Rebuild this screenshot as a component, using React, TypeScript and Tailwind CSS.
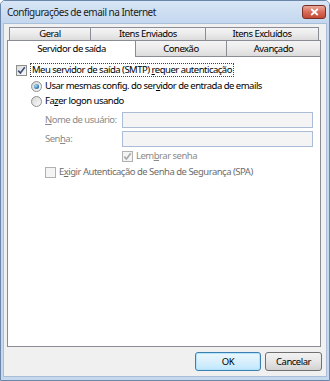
import React from "react";

function CheckBox({ checked, disabled }: { checked?: boolean; disabled?: boolean }) {
  return (
    <span
      className={
        "inline-flex w-[11px] h-[11px] shrink-0 items-center justify-center border " +
        (disabled ? "border-[#b1b1b1] bg-[#f4f4f4]" : "border-[#8e8f8f] bg-gradient-to-br from-[#dcdcdc] to-[#fafafa]")
      }
    >
      {checked && (
        <svg width="9" height="9" viewBox="0 0 9 9">
          <path
            d="M1.2 4.6 L3.4 7 L7.8 1.2"
            fill="none"
            stroke={disabled ? "#a8a8a8" : "#3b4f7a"}
            strokeWidth="1.6"
          />
        </svg>
      )}
    </span>
  );
}

function Radio({ checked }: { checked?: boolean }) {
  return (
    <span className="inline-flex w-[11px] h-[11px] shrink-0 items-center justify-center rounded-full border border-[#8e8f8f] bg-gradient-to-br from-[#d6d6d6] to-[#fbfbfb]">
      {checked && (
        <span className="w-[5px] h-[5px] rounded-full bg-[radial-gradient(circle_at_35%_35%,#a9e0f5,#2a73a8_70%,#1b4f7a)]" />
      )}
    </span>
  );
}

function U({ children }: { children: React.ReactNode }) {
  return <span className="underline underline-offset-[1px]">{children}</span>;
}

function Tab({ label, w, cls = "" }: { label: string; w: string; cls?: string }) {
  return (
    <div
      className={
        "flex items-center justify-center border border-b-0 border-[#898c95] bg-gradient-to-b from-[#f4f4f4] via-[#ebebeb] to-[#dcdcdc] text-[9.5px] leading-none " +
        w +
        " " +
        cls
      }
    >
      {label}
    </div>
  );
}

export default function App() {
  return (
    <div className="w-[330px] h-[381px] bg-[#c5d8ee] border border-[#6a86ab] rounded-t-[5px] flex flex-col overflow-hidden font-['Noto_Sans',sans-serif] tracking-[-0.5px] text-black">
      {/* title bar */}
      <div className="h-[22px] shrink-0 flex items-center justify-between pl-[6px] pr-[3px] bg-gradient-to-b from-[#d8e6f6] to-[#c3d7ee]">
        <span className="text-[10px] leading-none text-[#1b1b1b] whitespace-nowrap">Configurações de email na Internet</span>
        <div className="w-[24px] h-[14px] rounded-[3px] border border-[#7b2e24] bg-gradient-to-b from-[#e9a99b] via-[#d86a57] to-[#c24a36] flex items-center justify-center">
          <svg width="9" height="8" viewBox="0 0 9 8">
            <path d="M1.2 1 L7.8 7 M7.8 1 L1.2 7" stroke="#fff" strokeWidth="1.8" />
          </svg>
        </div>
      </div>

      {/* client area */}
      <div className="flex-1 mx-[2px] mb-[3px] bg-[#f0f0f0] border border-[#a9bed8] flex flex-col">
        <div className="pt-[3px] pl-[3px]">
          {/* tab row 1 */}
          <div className="flex h-[13px] ml-[2px]">
            <Tab label="Geral" w="w-[82px]" />
            <Tab label="Itens Enviados" w="w-[116px] -ml-px" />
            <Tab label="Itens Excluídos" w="w-[114px] -ml-px" />
          </div>
          {/* tab row 2 */}
          <div className="flex items-start h-[16px]">
            <div className="relative z-10 w-[129px] h-[17px] flex items-center justify-center border border-b-0 border-[#898c95] bg-white text-[9.5px] leading-none">
              Servidor de saída
            </div>
            <Tab label="Conexão" w="w-[92px] h-[16px] -ml-px" />
            <Tab label="Avançado" w="w-[95px] h-[16px] -ml-px" />
          </div>
          {/* panel */}
          <div className="w-[314px] h-[291px] bg-white border border-[#898c95] pt-[6px] pl-[8px] text-[9.5px] leading-none whitespace-nowrap">
            <div className="flex items-center h-[14px] gap-[3px]">
              <CheckBox checked />
              <span className="border border-dotted border-[#444] px-[1px] py-[1px]">
                Meu servidor de saída (SMTP) <U>r</U>equer autenticação
              </span>
            </div>
            <div className="flex items-center h-[14px] mt-[2px] ml-[15px] gap-[3px]">
              <Radio checked />
              <span>
                Usar mesmas config. do ser<U>v</U>idor de entrada de emails
              </span>
            </div>
            <div className="flex items-center h-[14px] mt-[1px] ml-[15px] gap-[3px]">
              <Radio />
              <span>
                Fa<U>z</U>er logon usando
              </span>
            </div>
            <div className="flex items-center h-[16px] mt-[4px] ml-[29px] text-[#8a8a8a]">
              <span className="w-[77px]">
                <U>N</U>ome de usuário:
              </span>
              <div className="w-[191px] h-[16px] border border-[#abbdd6] bg-[#f4f4f4]" />
            </div>
            <div className="flex items-center h-[16px] mt-[3px] ml-[29px] text-[#8a8a8a]">
              <span className="w-[77px]">
                Sen<U>h</U>a:
              </span>
              <div className="w-[191px] h-[16px] border border-[#abbdd6] bg-[#f4f4f4]" />
            </div>
            <div className="flex items-center h-[14px] mt-[2px] ml-[106px] gap-[3px] text-[#8a8a8a]">
              <CheckBox checked disabled />
              <span>
                Lem<U>b</U>rar senha
              </span>
            </div>
            <div className="flex items-center h-[14px] mt-[2px] ml-[29px] gap-[3px] text-[#6d6d6d]">
              <CheckBox disabled />
              <span>
                E<U>x</U>igir Autenticação de Senha de Segurança (SPA)
              </span>
            </div>
          </div>
        </div>
        {/* buttons */}
        <div className="flex justify-end gap-[4px] pr-[4px] mt-[5px]">
          <button className="w-[66px] h-[19px] rounded-[3px] border border-[#3c7fb1] bg-gradient-to-b from-[#eaf6fd] via-[#d9f0fc] to-[#bee6fd] text-[9.5px] leading-none shadow-[inset_0_0_0_1px_#b5e3fa]">
            OK
          </button>
          <button className="w-[57px] h-[19px] rounded-[3px] border border-[#707070] bg-gradient-to-b from-[#f2f2f2] via-[#e6e6e6] to-[#d2d2d2] text-[9.5px] leading-none">
            Cancelar
          </button>
        </div>
      </div>
    </div>
  );
}
